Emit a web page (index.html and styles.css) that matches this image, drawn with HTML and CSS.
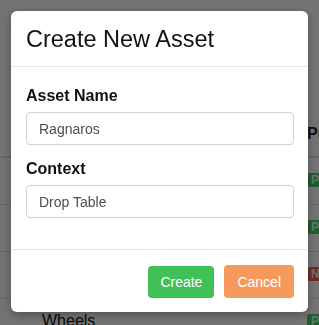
FILE: index.html
```html
<!DOCTYPE html>
<html>
<head>
<meta charset="utf-8">
<link rel="stylesheet" href="styles.css">
</head>
<body>
<div class="page">
  <div class="thead">
    <div class="name"></div>
    <div class="col-head">Published</div>
  </div>
  <div class="tr"><div class="name"></div><div class="status"><span class="badge ok">P</span></div></div>
  <div class="tr"><div class="name"></div><div class="status"><span class="badge ok">P</span></div></div>
  <div class="tr"><div class="name"></div><div class="status"><span class="badge no">N</span></div></div>
  <div class="tr"><div class="name">Wheels</div><div class="status"><span class="badge ok">P</span></div></div>
</div>

<div class="backdrop">
  <div class="modal">
    <div class="modal-header">
      <h5 class="modal-title">Create New Asset</h5>
    </div>
    <div class="modal-body">
      <div class="form-group">
        <label class="form-label">Asset Name</label>
        <input class="form-control" type="text" value="Ragnaros">
      </div>
      <div class="form-group last">
        <label class="form-label">Context</label>
        <input class="form-control" type="text" value="Drop Table">
      </div>
    </div>
    <div class="modal-footer">
      <button class="btn btn-create">Create</button>
      <button class="btn btn-cancel">Cancel</button>
    </div>
  </div>
</div>
</body>
</html>
```
FILE: styles.css
```css
html, body {
  margin: 0;
  padding: 0;
}
body {
  width: 319px;
  height: 325px;
  overflow: hidden;
  background: #ffffff;
  font-family: "Liberation Sans", Arial, sans-serif;
  color: #212529;
}

/* background page (table) */
.page {
  padding-top: 110px;
  width: 319px;
  height: 325px;
  box-sizing: border-box;
  overflow: hidden;
}
.thead {
  display: flex;
  height: 48px;
  box-sizing: border-box;
  padding-top: 14px;
  border-bottom: 2px solid #dee2e6;
}
.col-head {
  font-weight: bold;
  font-size: 16px;
  line-height: 20px;
  white-space: nowrap;
}
.tr {
  display: flex;
  height: 47px;
  box-sizing: border-box;
  padding-top: 12px;
  border-bottom: 1px solid #dee2e6;
}
.name {
  width: 307px;
  flex: none;
  box-sizing: border-box;
  padding-left: 42px;
  font-size: 16px;
  line-height: 20px;
  color: #111;
}
.status {
  flex: none;
}
.badge {
  display: inline-block;
  font-size: 12px;
  font-weight: bold;
  line-height: 14px;
  padding: 0 5px 0 4px;
  border-radius: 3px;
  color: #e8ffe8;
}
.badge.ok { background: #40d066; }
.badge.no { background: #ff5a5a; }

/* modal */
.backdrop {
  position: fixed;
  inset: 0;
  background: rgba(0, 0, 0, 0.55);
  display: flex;
  align-items: flex-start;
  padding: 11px;
}
.modal {
  width: 297px;
  background: #ffffff;
  border-radius: 6px;
  box-shadow: 0 3px 10px rgba(0, 0, 0, 0.3);
  overflow: hidden;
}
.modal-header {
  padding: 14px 15px 12px;
  border-bottom: 1px solid #e6e6e6;
}
.modal-title {
  margin: 0;
  font-size: 23.5px;
  line-height: 29px;
  font-weight: normal;
  color: #111;
}
.modal-body {
  padding: 17px 14px 31px 15px;
}
.form-group {
  margin-bottom: 12px;
}
.form-group.last {
  margin-bottom: 0;
}
.form-label {
  display: block;
  font-size: 16px;
  font-weight: bold;
  line-height: 24px;
  margin-bottom: 4px;
  color: #111;
}
.form-control {
  display: block;
  width: 100%;
  box-sizing: border-box;
  height: 33px;
  padding: 0 12px;
  border: 1px solid #cfd3d7;
  border-radius: 4px;
  font-family: "Liberation Sans", Arial, sans-serif;
  font-size: 14px;
  color: #4a4f55;
  background: #fff;
  outline: none;
}
.modal-footer {
  border-top: 1px solid #e6e6e6;
  padding: 16px 14px 14px;
  display: flex;
  justify-content: flex-end;
  gap: 10px;
}
.btn {
  height: 32px;
  padding: 0 13px;
  border: none;
  border-radius: 4px;
  font-family: "Liberation Sans", Arial, sans-serif;
  font-size: 14px;
  color: #ffffff;
  cursor: pointer;
}
.btn-create {
  background: #40c057;
  padding: 0 12px;
}
.btn-cancel {
  background: #f59a5c;
  height: 33px;
  margin-top: -1px;
}
```
